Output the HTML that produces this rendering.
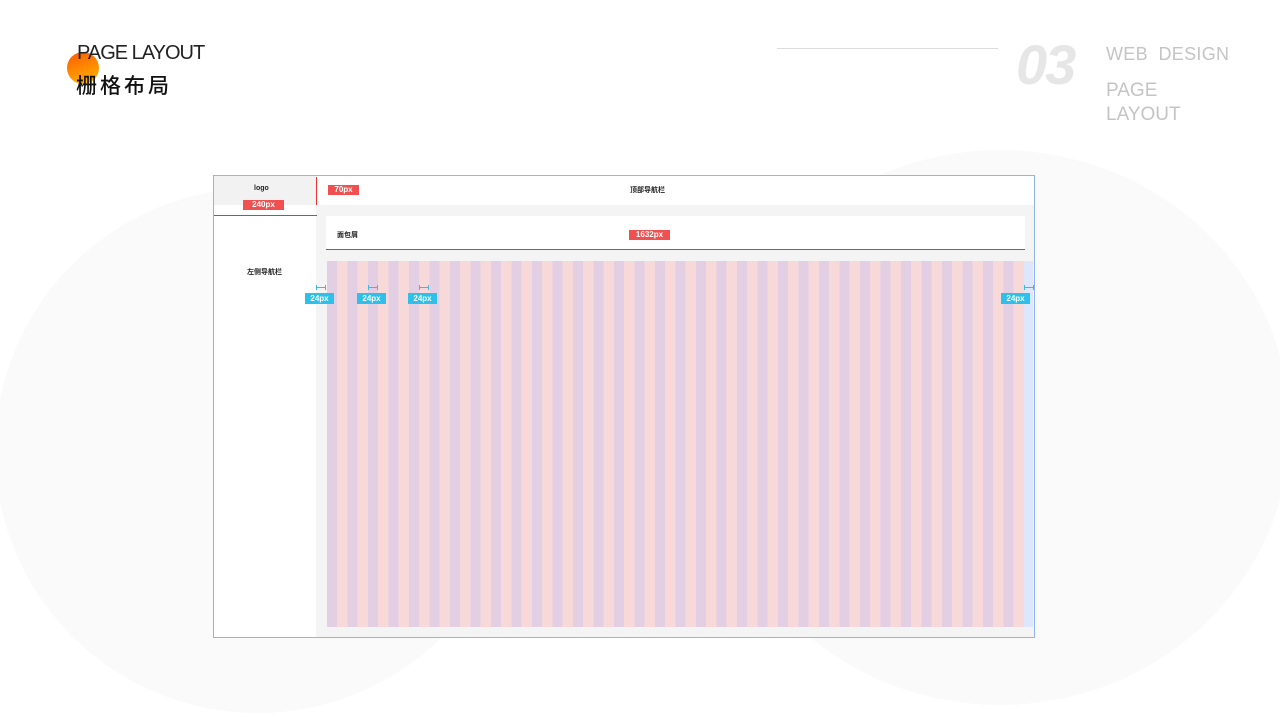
<!DOCTYPE html>
<html><head><meta charset="utf-8"><style>
*{margin:0;padding:0;box-sizing:border-box}
body{width:1280px;height:720px;position:relative;overflow:hidden;background:#fff;font-family:"Liberation Sans","Noto Sans CJK SC",sans-serif}
.a{position:absolute}
.tag{position:absolute;background:#f05050;color:#fff;font-size:8px;font-weight:bold;text-align:center;line-height:10px;height:10px}
.bt{position:absolute;background:#2cc0ea;color:#fff;font-size:8px;font-weight:bold;text-align:center;line-height:11px;height:11px;width:29px}
.bm{position:absolute;height:5px;width:10px;border-left:1px solid #2cc0ea;border-right:1px solid #2cc0ea}
.bm:after{content:"";position:absolute;left:0;right:0;top:2px;height:1px;background:#2cc0ea}
.lbl{position:absolute;font-size:7px;font-weight:bold;color:#222}
</style></head><body>
<div class="a" style="left:-5px;top:188px;width:525px;height:525px;border-radius:50%;background:#fafafa"></div>
<div class="a" style="left:710px;top:150px;width:580px;height:555px;border-radius:50%;background:#fafafa"></div>
<div class="a" style="left:67px;top:52px;width:32px;height:32px;border-radius:50%;background:linear-gradient(160deg,#ff5a00,#ffb800)"></div>
<div class="a" style="left:77px;top:42px;font-size:20px;color:#222;letter-spacing:-1px;font-weight:300">PAGE LAYOUT</div>
<div class="a" style="left:76px;top:70px;font-size:21px;color:#111;letter-spacing:3px;font-family:'Noto Sans CJK SC',sans-serif;font-weight:500">栅格布局</div>
<div class="a" style="left:777px;top:48px;width:221px;height:1px;background:#ddd"></div>
<div class="a" style="left:1016px;top:32px;font-size:56px;font-style:italic;font-weight:bold;color:#e6e6e6;letter-spacing:-2px">03</div>
<div class="a" style="left:1106px;top:44px;font-size:18px;color:#c4c4c4;font-weight:300;letter-spacing:0.3px">WEB&nbsp; DESIGN</div>
<div class="a" style="left:1106px;top:79px;font-size:19px;color:#c4c4c4;line-height:24px;font-weight:300">PAGE<br>LAYOUT</div>

<div class="a" style="left:213px;top:175px;width:822px;height:463px;border:1px solid #8fb4ee;background:#f4f4f4"></div>
<div class="a" style="left:214px;top:176px;width:102px;height:29px;background:#f2f2f2"></div>
<div class="a" style="left:316px;top:176px;width:718px;height:29px;background:#fff"></div>
<div class="a" style="left:214px;top:205px;width:102px;height:432px;background:#fff"></div>
<div class="a" style="left:326px;top:216px;width:699px;height:33px;background:#fff"></div>
<div class="a" style="left:327px;top:261px;width:697px;height:366px;background:repeating-linear-gradient(90deg,#e2cfe3 0,#e2cfe3 10px,#f8d9da 10px,#f8d9da 20.5px)"></div>
<div class="a" style="left:1024px;top:261px;width:9px;height:366px;background:#dde6fa"></div>

<div class="lbl" style="left:254px;top:185px">logo</div>
<div class="lbl" style="left:630px;top:185px">顶部导航栏</div>
<div class="lbl" style="left:337px;top:230px">面包屑</div>
<div class="lbl" style="left:247px;top:267px">左侧导航栏</div>

<div class="a" style="left:316px;top:177px;width:1px;height:28px;background:#f03030"></div>
<div class="tag" style="left:328px;top:185px;width:31px">70px</div>
<div class="tag" style="left:243px;top:200px;width:41px">240px</div>
<div class="a" style="left:214px;top:215px;width:103px;height:1px;background:#f03030"></div>
<div class="tag" style="left:629px;top:230px;width:41px">1632px</div>
<div class="a" style="left:326px;top:249px;width:699px;height:1px;background:#f03030"></div>

<div class="bm" style="left:316px;top:285px"></div>
<div class="bm" style="left:368px;top:285px"></div>
<div class="bm" style="left:419px;top:285px"></div>
<div class="bm" style="left:1024px;top:285px"></div>
<div class="bt" style="left:305px;top:293px">24px</div>
<div class="bt" style="left:357px;top:293px">24px</div>
<div class="bt" style="left:408px;top:293px">24px</div>
<div class="bt" style="left:1001px;top:293px">24px</div>
</body></html>
